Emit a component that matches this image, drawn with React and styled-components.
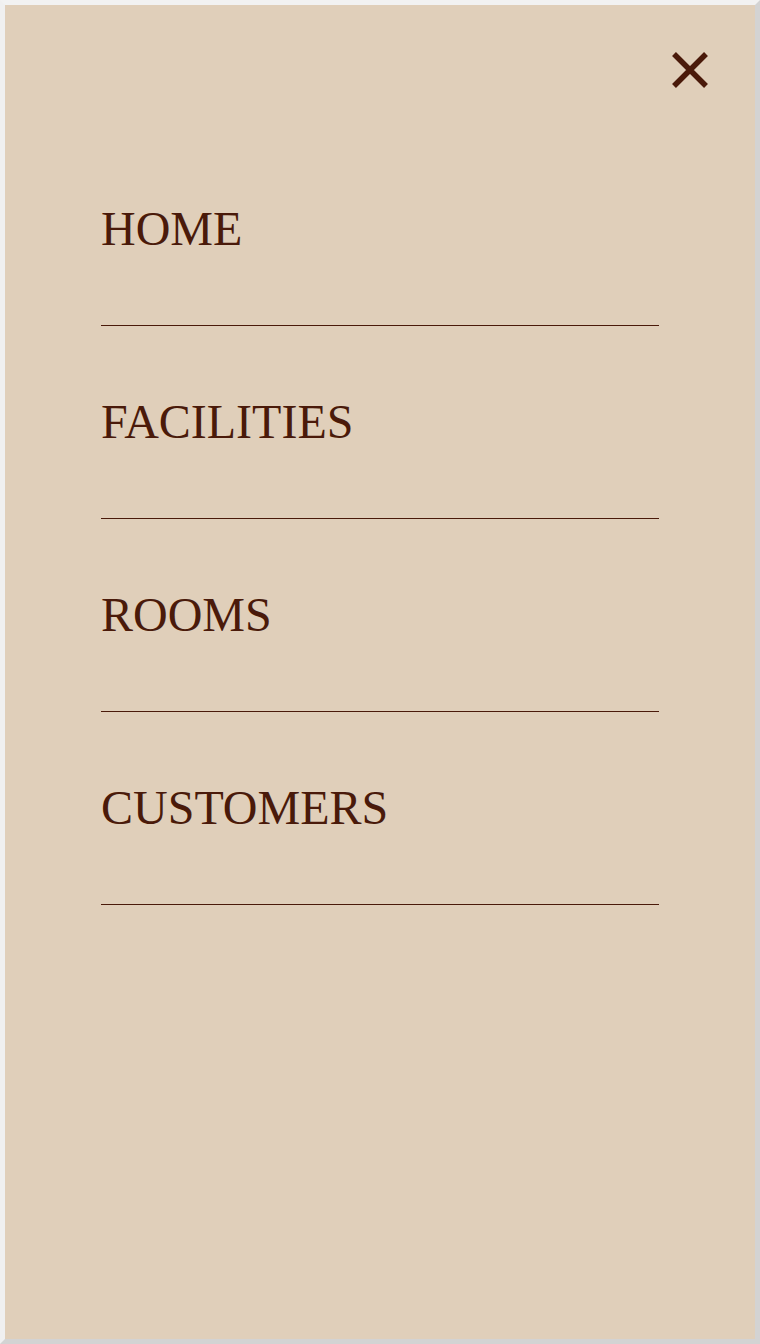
import React from 'react';
import styled, { createGlobalStyle } from 'styled-components';

const GlobalStyle = createGlobalStyle`
  html, body {
    margin: 0;
    padding: 0;
    background: #ffffff;
  }
  * {
    box-sizing: border-box;
  }
`;

const Panel = styled.div`
  width: 760px;
  height: 1344px;
  background: #e0cfba;
  border-style: solid;
  border-width: 5px;
  border-color: #d3d3d3 #d3d3d3 #d3d3d3 #f0f0f0;
  border-top-color: #f2f2f2;
  display: flex;
  flex-direction: column;
`;

const Header = styled.div`
  height: 128px;
  display: flex;
  justify-content: flex-end;
  align-items: flex-start;
  padding: 47px 47px 0 0;
`;

const CloseButton = styled.button`
  width: 36px;
  height: 36px;
  padding: 0;
  border: none;
  background: none;
  cursor: pointer;
  display: block;
  color: #4a1a0a;
`;

const Nav = styled.nav`
  display: flex;
  flex-direction: column;
  padding: 0 96px;
`;

const NavItem = styled.a`
  display: block;
  padding: 72px 0;
  border-bottom: 1px solid #4a1a0a;
  font-family: "Liberation Serif", "Times New Roman", serif;
  font-size: 48px;
  line-height: 48px;
  color: #4a1a0a;
  text-decoration: none;
  text-transform: uppercase;
`;

const items = ['Home', 'Facilities', 'Rooms', 'Customers'];

export default function App() {
  return (
    <>
      <GlobalStyle />
      <Panel>
        <Header>
          <CloseButton aria-label="Close menu">
            <svg width="36" height="36" viewBox="0 0 36 36">
              <path
                d="M2 2 L34 34 M34 2 L2 34"
                stroke="currentColor"
                strokeWidth="5.5"
                fill="none"
              />
            </svg>
          </CloseButton>
        </Header>
        <Nav>
          {items.map((item) => (
            <NavItem key={item} href="#">
              {item}
            </NavItem>
          ))}
        </Nav>
      </Panel>
    </>
  );
}
